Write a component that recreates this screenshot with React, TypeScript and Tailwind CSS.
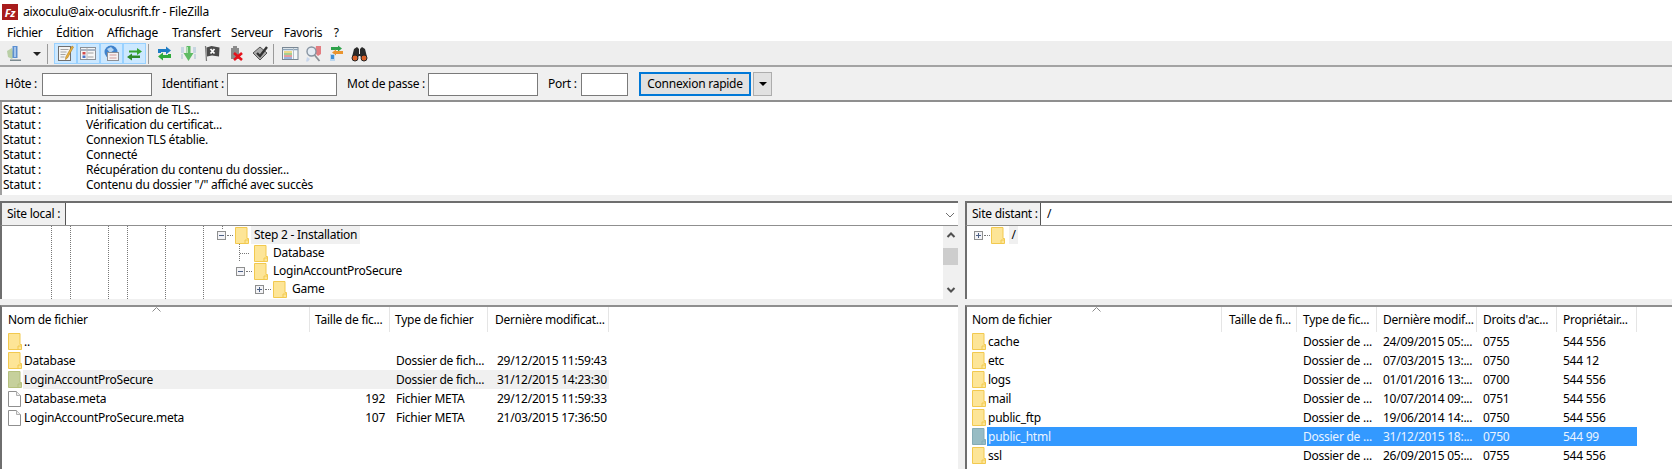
import type { ReactNode } from "react";

const font = "font-['Noto_Sans',sans-serif]";

function Folder({ tone = "yellow" }: { tone?: "yellow" | "olive" | "blue" }) {
  const fill = tone === "yellow" ? "#fde597" : tone === "olive" ? "#c6d09c" : "#97bcc4";
  const edge = tone === "yellow" ? "#f2c94f" : tone === "olive" ? "#b5c07e" : "#84abb5";
  return (
    <svg width="14" height="17" viewBox="0 0 14 17" className="shrink-0">
      <path d="M.5.5h11.5v11h1.5v5H.5z" fill={fill} stroke={edge} />
      <path d="M10 16.5v-3.5h3" fill="none" stroke={edge} />
    </svg>
  );
}

function FileIcon() {
  return (
    <svg width="13" height="16" viewBox="0 0 13 16" className="shrink-0">
      <path d="M.5.5h8l4 4v11H.5z" fill="#fff" stroke="#8f8f8f" />
      <path d="M8.5.5v4h4" fill="#eee" stroke="#b0b0b0" />
    </svg>
  );
}

function Expander({ open }: { open?: boolean }) {
  return (
    <svg width="9" height="9" viewBox="0 0 9 9" className="shrink-0">
      <rect x=".5" y=".5" width="8" height="8" fill="#f3f3f6" stroke="#8e8f8f" />
      <path d="M2 4.5h5" stroke="#4d6185" />
      {!open && <path d="M4.5 2v5" stroke="#4d6185" />}
    </svg>
  );
}

function ToolIcon({ children }: { children: ReactNode }) {
  return (
    <svg width="17" height="17" viewBox="0 0 17 17">
      {children}
    </svg>
  );
}

const icons: Record<string, ReactNode> = {
  site: (
    <>
      <path d="M1 6l5-3 2 8-2 3-4-2z" fill="#b9cfa6" />
      <rect x="6.5" y="1" width="5" height="12" fill="#5b8fd0" />
      <rect x="8" y="2" width="2" height="10" fill="#a5c5ea" />
      <path d="M4 14.5h11v1.5H4z" fill="#7c8a8f" />
    </>
  ),
  log: (
    <>
      <rect x="1.5" y="1.5" width="12" height="14" fill="#f4f4f4" stroke="#6f6f6f" />
      <path d="M3.5 4.5h8M3.5 7h6M3.5 9.5h5M3.5 12h4" stroke="#a5a5a5" />
      <path d="M15 1l1.5 1-6 11-2 1.5.3-2.5z" fill="#eeb33c" stroke="#a8761c" strokeWidth=".6" />
    </>
  ),
  tree: (
    <>
      <rect x=".5" y="2.5" width="15" height="12" fill="#f6f6f6" stroke="#8a8f96" />
      <path d="M.5 5h15" stroke="#a9b4c2" strokeWidth="2" />
      <rect x="2.5" y="7" width="3" height="2.5" fill="#d34a4a" />
      <rect x="2.5" y="10.5" width="3" height="2.5" fill="#4a74c9" />
      <path d="M7.5 8h6M7.5 12h6" stroke="#a0a0a0" />
      <path d="M7 3v11" stroke="#b8b8b8" />
    </>
  ),
  queue: (
    <>
      <circle cx="8" cy="7" r="6.5" fill="#3f82cc" />
      <path d="M4 4l4-2 3 3-4 3z" fill="#b7d6f2" />
      <rect x="4.5" y="7.5" width="11" height="8" fill="#f5f2f2" stroke="#8c8f96" />
      <path d="M6.5 10h7M6.5 13h7" stroke="#d09a9a" />
    </>
  ),
  swap: (
    <>
      <path d="M3 5.5h8V3l5 3.5-5 3.5V7.5H3z" fill="#34a52e" />
      <path d="M14 10.5H6V8.5l-5 3.5 5 3.5V13h8z" fill="#2c8a2a" />
    </>
  ),
  refresh: (
    <>
      <path d="M2 8V4h8V1.5l5 4-5 4V7H5v1z" fill="#1e7cc4" />
      <path d="M15 9v4H7v2.5l-5-4 5-4V10h5V9z" fill="#2eaa3a" />
    </>
  ),
  process: (
    <>
      <path d="M1 2h3v6H1zM13 2h3v6h-3z" fill="#c7d6e2" />
      <path d="M6.5 1h4v7h3l-5 8-5-8h3z" fill="#5dbb63" />
      <path d="M1 9h2v5H1zM14 9h2v5h-2z" fill="#c9d5df" />
      <path d="M7.5 2v6" stroke="#b9e4bc" />
    </>
  ),
  flag: (
    <>
      <path d="M1.5 1l1 15" stroke="#777" strokeWidth="1.2" />
      <path d="M2.5 2.5L7.5 1l8 1.5-.5 9-7-1-5 1z" fill="#4a4a4a" />
      <path d="M6.5 4l4 4.5M10.5 4l-4 4.5" stroke="#fff" strokeWidth="1.8" />
    </>
  ),
  cancel: (
    <>
      <path d="M5 1h4v2h2v11H3V3h2z" fill="#8a8a8a" />
      <path d="M6 8l8 7M14 8l-8 7" stroke="#e5121c" strokeWidth="2.6" />
    </>
  ),
  check: (
    <>
      <path d="M1 8l7-6 7 6-7 7z" fill="#a9a9a9" stroke="#555" />
      <path d="M5 8l3 3 7-9" fill="none" stroke="#333" strokeWidth="2.4" />
    </>
  ),
  filter: (
    <>
      <rect x=".5" y="2.5" width="15.5" height="12" fill="#f4f7f9" stroke="#7a8794" />
      <path d="M.5 4.5h15.5" stroke="#8fa5b9" strokeWidth="1.5" />
      <path d="M2 7h8" stroke="#e7c43b" strokeWidth="1.2" />
      <path d="M2 9h8" stroke="#6fb04a" strokeWidth="1.2" />
      <path d="M2 11h8" stroke="#d85d5d" strokeWidth="1.2" />
      <path d="M2 13h8" stroke="#5d83c9" strokeWidth="1.2" />
      <path d="M11.5 3v11" stroke="#b5bec6" />
    </>
  ),
  compare: (
    <>
      <path d="M11 1h5v8l-3 2-3-3z" fill="#e0686d" opacity=".85" />
      <circle cx="6.5" cy="6.5" r="4.5" fill="#e5edf5" stroke="#8693a1" strokeWidth="1.4" />
      <path d="M9.5 10l5 6" stroke="#8a8f96" strokeWidth="1.8" />
      <path d="M2 12l3 2-2 2.5H1z" fill="#c8d6ec" />
    </>
  ),
  sync: (
    <>
      <path d="M3 5V2h7V.5l4 3-4 3V5H5z" fill="#2ea24b" />
      <path d="M15 6v3H8v1.5l-4-3 4-3V6z" fill="#ea9530" />
      <path d="M2 9h5v7H2z" fill="#bcd7ef" />
      <path d="M3 10h3v4H3z" fill="#3d8fd6" />
    </>
  ),
  binoculars: (
    <>
      <path d="M3 4l3-2 2 2v5h1V4l2-2 3 2 2 8H9.5v-1h-2v1H1z" fill="#2a2a2a" />
      <circle cx="4" cy="13" r="3" fill="#d8612a" stroke="#222" />
      <circle cx="13" cy="13" r="3" fill="#d8612a" stroke="#222" />
    </>
  ),
};

function Toolbar() {
  return (
    <div className="flex h-[26px] items-center border-b-2 border-[#a3a3a3] bg-[#eeeeee] pl-[6px] pt-px">
      <ToolIcon>{icons.site}</ToolIcon>
      <div className="ml-[10px] h-0 w-0 border-x-[4px] border-t-[4px] border-x-transparent border-t-[#222]" />
      <div className="mx-[6px] h-[20px] w-px shrink-0 bg-[#9a9a9a]" />
      <div className="flex h-[21px] shrink-0">
        {["log", "tree", "queue", "swap"].map((k) => (
          <div key={k} className="flex w-[23px] items-center justify-center border border-[#99d1ff] bg-[#cce8ff]">
            <ToolIcon>{icons[k]}</ToolIcon>
          </div>
        ))}
      </div>
      <div className="ml-[2px] mr-[7px] h-[20px] w-px shrink-0 bg-[#9a9a9a]" />
      <div className="flex gap-[7px]">
        {["refresh", "process", "flag", "cancel", "check"].map((k) => (
          <ToolIcon key={k}>{icons[k]}</ToolIcon>
        ))}
      </div>
      <div className="ml-[4px] mr-[8px] h-[20px] w-px shrink-0 bg-[#9a9a9a]" />
      <div className="flex gap-[6px]">
        {["filter", "compare", "sync", "binoculars"].map((k) => (
          <ToolIcon key={k}>{icons[k]}</ToolIcon>
        ))}
      </div>
    </div>
  );
}

function Field({ label, labelClass, inputClass }: { label: string; labelClass: string; inputClass: string }) {
  return (
    <>
      <span className={labelClass}>{label}</span>
      <div className={`h-[23px] border border-[#7a7a7a] bg-white ${inputClass}`} />
    </>
  );
}

function QuickConnect() {
  return (
    <div className="flex h-[35px] items-center border-b-2 border-[#8f8f8f] bg-[#f0f0f0] pl-[5px] pt-px">
      <Field label="Hôte :" labelClass="w-[37px]" inputClass="w-[110px]" />
      <Field label="Identifiant :" labelClass="ml-[10px] w-[65px]" inputClass="w-[110px]" />
      <Field label="Mot de passe :" labelClass="ml-[10px] w-[81px]" inputClass="w-[110px]" />
      <Field label="Port :" labelClass="ml-[10px] w-[33px]" inputClass="w-[47px]" />
      <div className="ml-[11px] flex h-[24px] w-[112px] items-center justify-center border-2 border-[#0078d7] bg-[#e1e1e1]">
        Connexion rapide
      </div>
      <div className="ml-[2px] flex h-[24px] w-[19px] items-center justify-center border border-[#adadad] bg-[#e1e1e1]">
        <div className="h-0 w-0 border-x-[4px] border-t-[4px] border-x-transparent border-t-black" />
      </div>
    </div>
  );
}

const logLines = [
  "Initialisation de TLS...",
  "Vérification du certificat...",
  "Connexion TLS établie.",
  "Connecté",
  "Récupération du contenu du dossier...",
  'Contenu du dossier "/" affiché avec succès',
];

function LogPane() {
  return (
    <div className="h-[93px] border-l-2 border-[#a0a0a0] bg-white pl-px">
      {logLines.map((line) => (
        <div key={line} className="flex h-[15px] items-center">
          <span className="w-[83px]">Statut :</span>
          <span>{line}</span>
        </div>
      ))}
    </div>
  );
}

function SiteBar({ label, value, labelWidth, chevron }: { label: string; value?: string; labelWidth: string; chevron?: boolean }) {
  return (
    <div className="flex h-[25px] border-t-2 border-l-2 border-b border-t-[#6e6e6e] border-l-[#6e6e6e] border-b-[#8f8f8f] bg-white">
      <div className={`flex items-center border-r border-[#555] bg-[#f0f0f0] pl-[5px] ${labelWidth}`}>{label}</div>
      <div className="flex flex-1 items-center pl-[6px]">{value}</div>
      {chevron && (
        <svg width="12" height="12" viewBox="0 0 12 12" className="mr-[2px] mt-[6px]">
          <path d="M2 4l4 4 4-4" fill="none" stroke="#707070" />
        </svg>
      )}
    </div>
  );
}

function TreeRow({ indent, label, expander, highlighted }: { indent: string; label: string; expander?: "open" | "closed"; highlighted?: boolean }) {
  return (
    <div className={`flex h-[18px] items-center ${indent}`}>
      <div className="flex w-[18px] items-center">
        {expander && <Expander open={expander === "open"} />}
        {expander && <div className="ml-px h-0 w-[6px] border-t border-dotted border-[#777]" />}
      </div>
      <Folder />
      <span className={`ml-[2px] flex h-[18px] items-center px-[3px] ${highlighted ? "bg-[#f0f0f0]" : ""}`}>{label}</span>
    </div>
  );
}

function Scrollbar() {
  return (
    <div className="flex w-[15px] shrink-0 flex-col items-center justify-between bg-[#f0f0f0] py-[5px]">
      <svg width="10" height="8" viewBox="0 0 10 8">
        <path d="M1.5 6L5 2.5 8.5 6" fill="none" stroke="#505050" strokeWidth="2" />
      </svg>
      <div className="h-[17px] w-full bg-[#cdcdcd]" />
      <div className="h-[2px]" />
      <svg width="10" height="8" viewBox="0 0 10 8">
        <path d="M1.5 2L5 5.5 8.5 2" fill="none" stroke="#505050" strokeWidth="2" />
      </svg>
    </div>
  );
}

function LocalTree() {
  return (
    <div className="relative flex h-[73px] border-l-2 border-[#6e6e6e] bg-white">
      {/* tree guide lines */}
      <svg width="230" height="73" className="pointer-events-none absolute left-0 top-0">
        {[49, 68, 106, 125, 163, 201].map((x) => (
          <line key={x} x1={x + 0.5} x2={x + 0.5} y1="0" y2="73" stroke="#777" strokeDasharray="1 1" />
        ))}
        <line x1="220.5" x2="220.5" y1="0" y2="4" stroke="#777" strokeDasharray="1 1" />
      </svg>
      <div className="relative flex-1 overflow-hidden">
        <TreeRow indent="pl-[215px]" label="Step 2 - Installation" expander="open" highlighted />
        <div className="relative">
          <TreeRow indent="pl-[234px]" label="Database" />
          <svg width="20" height="18" className="absolute left-[237px] top-0">
            <line x1=".5" x2=".5" y1="0" y2="18" stroke="#777" strokeDasharray="1 1" />
            <line x1="1" x2="11" y1="9.5" y2="9.5" stroke="#777" strokeDasharray="1 1" />
          </svg>
        </div>
        <TreeRow indent="pl-[234px]" label="LoginAccountProSecure" expander="open" />
        <TreeRow indent="pl-[253px]" label="Game" expander="closed" />
      </div>
      <Scrollbar />
    </div>
  );
}

function RemoteTree() {
  return (
    <div className="h-[73px] border-l-2 border-[#6e6e6e] bg-white pl-[7px]">
      <div className="flex h-[18px] items-center">
        <Expander />
        <div className="ml-px h-0 w-[6px] border-t border-dotted border-[#777]" />
        <div className="ml-[1px]">
          <Folder />
        </div>
        <span className="ml-[4px] flex h-[18px] w-[9px] items-center justify-center bg-[#f0f0f0]">/</span>
      </div>
    </div>
  );
}

type Col = { label: string; width: string; pad?: string };

function ListHeader({ cols }: { cols: Col[] }) {
  return (
    <div className="relative flex h-[25px] items-center">
      {cols.map((c) => (
        <div key={c.label} className={`flex h-[25px] shrink-0 items-center overflow-hidden border-r border-[#e5e5e5] ${c.pad ?? "pl-[5px]"} ${c.width}`}>
          {c.label}
        </div>
      ))}
    </div>
  );
}

function SortCaret({ className }: { className: string }) {
  return (
    <svg width="9" height="5" viewBox="0 0 9 5" className={`absolute top-0 ${className}`}>
      <path d="M.5 4.5l4-4 4 4" fill="none" stroke="#8a8a8a" />
    </svg>
  );
}

const localFiles = [
  { name: "..", kind: "folder", size: "", type: "", date: "" },
  { name: "Database", kind: "folder", size: "", type: "Dossier de fich...", date: "29/12/2015 11:59:43" },
  { name: "LoginAccountProSecure", kind: "olive", size: "", type: "Dossier de fich...", date: "31/12/2015 14:23:30" },
  { name: "Database.meta", kind: "file", size: "192", type: "Fichier META", date: "29/12/2015 11:59:33" },
  { name: "LoginAccountProSecure.meta", kind: "file", size: "107", type: "Fichier META", date: "21/03/2015 17:36:50" },
];

function LocalList() {
  return (
    <div className="relative h-[164px] border-l-2 border-t-2 border-[#6e6e6e] border-t-[#8f8f8f] bg-white">
      <SortCaret className="left-[150px]" />
      <ListHeader
        cols={[
          { label: "Nom de fichier", width: "w-[308px]", pad: "pl-[6px]" },
          { label: "Taille de fic...", width: "w-[80px]" },
          { label: "Type de fichier", width: "w-[98px]" },
          { label: "Dernière modificat...", width: "w-[121px]", pad: "pl-[7px]" },
        ]}
      />
      <div className="pl-[6px]">
        {localFiles.map((f) => (
          <div key={f.name} className="flex h-[19px] items-center">
            <div className="flex w-[15px] shrink-0 items-center">
              {f.kind === "file" ? <FileIcon /> : <Folder tone={f.kind === "olive" ? "olive" : "yellow"} />}
            </div>
            <div className={`flex h-[19px] w-[586px] items-center ${f.kind === "olive" ? "bg-[#f0f0f0]" : ""}`}>
              <span className="w-[338px] pl-px">{f.name}</span>
              <span className="w-[24px] text-right">{f.size}</span>
              <span className="w-[112px] pl-[11px]">{f.type}</span>
              <span>{f.date}</span>
            </div>
          </div>
        ))}
      </div>
    </div>
  );
}

const remoteFiles = [
  { name: "cache", date: "24/09/2015 05:...", mode: "0755", owner: "544 556" },
  { name: "etc", date: "07/03/2015 13:...", mode: "0750", owner: "544 12" },
  { name: "logs", date: "01/01/2016 13:...", mode: "0700", owner: "544 556" },
  { name: "mail", date: "10/07/2014 09:...", mode: "0751", owner: "544 556" },
  { name: "public_ftp", date: "19/06/2014 14:...", mode: "0750", owner: "544 556" },
  { name: "public_html", date: "31/12/2015 18:...", mode: "0750", owner: "544 99" },
  { name: "ssl", date: "26/09/2015 05:...", mode: "0755", owner: "544 556" },
];

function RemoteList() {
  return (
    <div className="relative h-[164px] border-l-2 border-t-2 border-[#6e6e6e] border-t-[#8f8f8f] bg-white">
      <SortCaret className="left-[125px]" />
      <ListHeader
        cols={[
          { label: "Nom de fichier", width: "w-[255px]", pad: "pl-[5px]" },
          { label: "Taille de fi...", width: "w-[75px]", pad: "pl-[7px]" },
          { label: "Type de fic...", width: "w-[80px]", pad: "pl-[6px]" },
          { label: "Dernière modif...", width: "w-[100px]", pad: "pl-[6px]" },
          { label: "Droits d'ac...", width: "w-[80px]", pad: "pl-[6px]" },
          { label: "Propriétair...", width: "w-[80px]", pad: "pl-[6px]" },
        ]}
      />
      <div className="pl-[5px]">
        {remoteFiles.map((f) => {
          const selected = f.name === "public_html";
          return (
            <div key={f.name} className="flex h-[19px] items-center">
              <div className="flex w-[15px] shrink-0 items-center">
                <Folder tone={selected ? "blue" : "yellow"} />
              </div>
              <div className={`flex h-[19px] w-[650px] items-center ${selected ? "bg-[#3399ff] text-[#eaf4ff]" : ""}`}>
                <span className="w-[316px] pl-px">{f.name}</span>
                <span className="w-[80px]">Dossier de ...</span>
                <span className="w-[100px]">{f.date}</span>
                <span className="w-[80px]">{f.mode}</span>
                <span>{f.owner}</span>
              </div>
            </div>
          );
        })}
      </div>
    </div>
  );
}

const menu = [
  { label: "Fichier", gap: "ml-0" },
  { label: "Édition", gap: "ml-[13.5px]" },
  { label: "Affichage", gap: "ml-[13.5px]" },
  { label: "Transfert", gap: "ml-[14px]" },
  { label: "Serveur", gap: "ml-[10.5px]" },
  { label: "Favoris", gap: "ml-[11px]" },
  { label: "?", gap: "ml-[11.5px]" },
];

export default function App() {
  return (
    <div className={`h-[469px] w-[1672px] overflow-hidden whitespace-nowrap bg-[#f0f0f0] text-[12px] leading-none tracking-[-0.25px] text-black ${font}`}>
      {/* title bar */}
      <div className="flex h-[24px] items-center bg-white pl-[2px]">
        <div className="flex h-[16px] w-[16px] items-center justify-center bg-[#a81c1c] text-[11px] font-bold italic text-white">Fz</div>
        <span className="ml-[5px]">aixoculu@aix-oculusrift.fr - FileZilla</span>
      </div>
      <div className="flex h-[17px] items-center bg-white pl-[7px]">
        {menu.map((m) => (
          <span key={m.label} className={m.gap}>
            {m.label}
          </span>
        ))}
      </div>
      <Toolbar />
      <QuickConnect />
      <LogPane />
      <div className="mt-[6px] flex gap-[7px]">
        <div className="flex w-[958px] shrink-0 flex-col gap-[6px]">
          <div>
            <SiteBar label="Site local :" labelWidth="w-[64px]" chevron />
            <LocalTree />
          </div>
          <LocalList />
        </div>
        <div className="flex flex-1 flex-col gap-[6px]">
          <div>
            <SiteBar label="Site distant :" value="/" labelWidth="w-[74px]" />
            <RemoteTree />
          </div>
          <RemoteList />
        </div>
      </div>
    </div>
  );
}
